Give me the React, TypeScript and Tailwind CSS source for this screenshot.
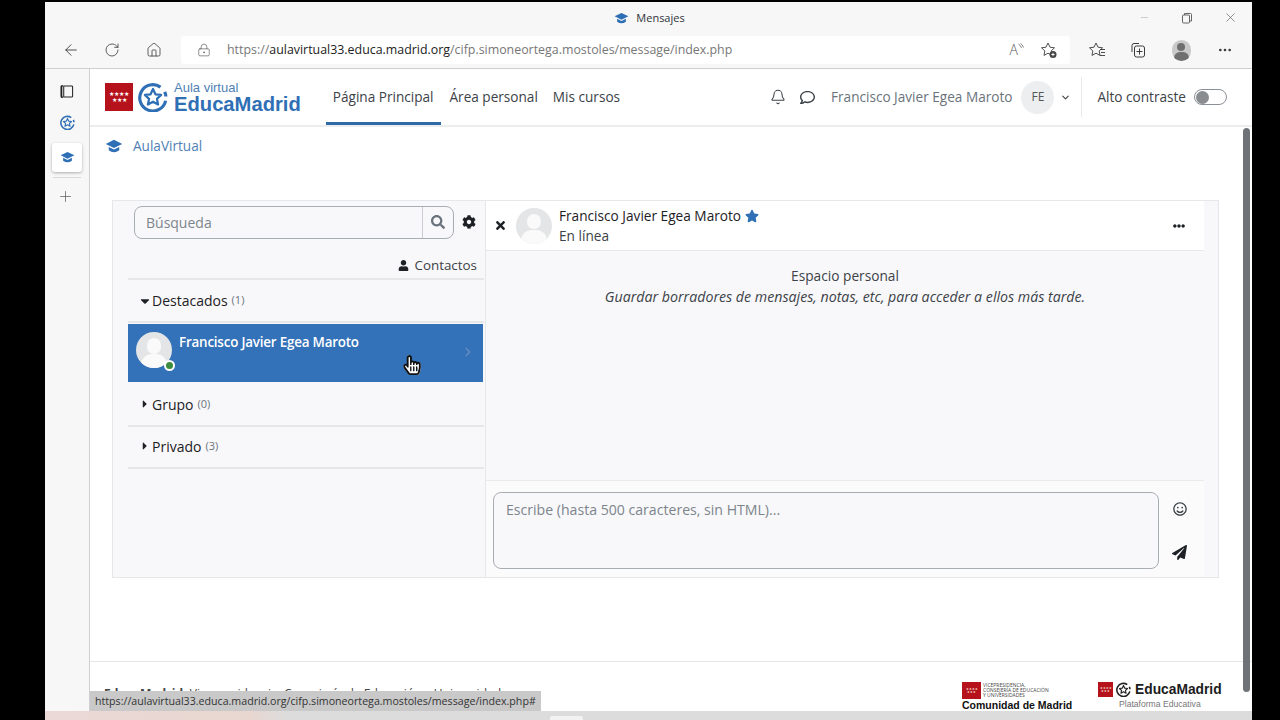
import {
  FaCaretDown,
  FaCaretRight,
  FaChevronRight,
  FaCog,
  FaEllipsisH,
  FaHandPointer,
  FaPaperPlane,
  FaRegComment,
  FaRegHandPointer,
  FaRegSmile,
  FaSearch,
  FaStar,
  FaTimes,
  FaUser,
} from "react-icons/fa";
import { ArrowLeft, Bell, ChevronDown, Ellipsis, Home, LockKeyhole, Minus, Plus, RotateCw, X } from "lucide-react";

function Cap({ className }: { className: string }) {
  return (
    <svg viewBox="0 0 24 20" className={className} fill="currentColor">
      <path d="M12 1l11 5.500L12 12 1 6.500z" />
      <path d="M5 10.500V15q7 5 14 0v-4.500L12 14z" />
    </svg>
  );
}

function RingStar({ className }: { className: string }) {
  return (
    <svg viewBox="0 0 32 32" className={className} fill="none" stroke="currentColor">
      <path d="M24 5.500A14 14 0 1 0 29.500 20" strokeWidth="3.400" />
      <path d="M28.500 10.500a14 14 0 0 1 1.200 5" strokeWidth="3.400" />
      <path
        d="M16 7.500l2.600 5.600 6.100.7-4.500 4.200 1.200 6-5.400-3-5.400 3 1.200-6-4.500-4.200 6.100-.7z"
        strokeWidth="2.400"
        strokeLinejoin="round"
      />
    </svg>
  );
}

function MadridFlag({ className, star }: { className: string; star: string }) {
  return (
    <div className={`flex items-center justify-center bg-[#b5121b] text-center text-white ${className}`}>
      <span className={star}>
        ★★★★
        <br />
        ★★★
      </span>
    </div>
  );
}

function Avatar({ className }: { className: string }) {
  return (
    <div className={`relative shrink-0 overflow-hidden rounded-full bg-[#e4e5e6] ${className}`}>
      <div className="absolute left-[30%] top-[18%] h-[42%] w-[40%] rounded-full bg-[#fafafa]" />
      <div className="absolute left-[14%] top-[62%] h-[60%] w-[72%] rounded-full bg-[#fafafa]" />
    </div>
  );
}

function ContactGroup({ label, count, open }: { label: string; count: number; open?: boolean }) {
  return (
    <div className={`flex items-center border-b-2 border-[#e6e7e8] pl-[10px] ${open ? "h-[43px]" : "h-[42px] pb-[2px]"}`}>
      <span className="flex w-[14px] justify-center text-[#1d2125]">
        {open ? <FaCaretDown className="text-[14px]" /> : <FaCaretRight className="text-[12px]" />}
      </span>
      <span className="text-[14px] text-[#1d2125]">{label}</span>
      <span className="ml-1 text-[11px] text-[#6a737b]">({count})</span>
    </div>
  );
}

export default function App() {
  return (
    <div className="relative flex h-[720px] w-[1280px] overflow-hidden bg-black pl-[45px] pr-[28px] pt-[2px] font-['Open_Sans',sans-serif]">
      <div className="flex h-[718px] w-full flex-col bg-[#f7f7f7]">
        {/* title bar */}
        <div className="relative flex h-[34px] shrink-0 items-center justify-center gap-[7px] pb-[2px] pl-[2px] text-[11px] text-[#30343a]">
          <Cap className="h-[13px] w-[15px] text-[#2f6fb5]" />
          <span>Mensajes</span>
          <div className="absolute left-[1094px] top-[8px] flex items-center text-[#555]">
            <Minus size={11} strokeWidth={1} className="text-[#999]" />
            <svg viewBox="0 0 12 12" className="ml-[31px] h-[12px] w-[12px]" fill="none" stroke="currentColor" strokeWidth="0.9">
              <rect x="1.500" y="3" width="7" height="8" rx="1" />
              <path d="M3.500 3V1.500h6a1 1 0 0 1 1 1V9H8.500" />
            </svg>
            <X size={15} strokeWidth={1} className="ml-[30px]" />
          </div>
        </div>

        {/* toolbar */}
        <div className="flex h-[32px] shrink-0 items-center pb-[4px] pl-[17px] pr-[18px] text-[#3a3a3a]">
          <ArrowLeft size={18} strokeWidth={1.2} />
          <RotateCw size={16} strokeWidth={1.2} className="ml-[24px]" />
          <Home size={16} strokeWidth={1.2} className="ml-[26px]" />
          <div className="ml-[19px] flex h-[28px] w-[889px] items-center rounded-[3px] bg-white pl-[16px] pr-[12px]">
            <LockKeyhole size={14} strokeWidth={1.1} className="text-[#555]" />
            <span className="ml-[16px] text-[12.4px] text-[#777]">
              https://<span className="text-[#222]">aulavirtual33.educa.madrid.org</span>/cifp.simoneortega.mostoles/message/index.php
            </span>
            <span className="ml-auto flex items-start text-[#555]">
              <span className="text-[14px] font-light leading-[14px]">A</span>
              <svg viewBox="0 0 6 8" className="h-[8px] w-[6px]" fill="none" stroke="currentColor" strokeWidth="0.7">
                <path d="M0.500 1q2 1 3 4M2.500 0.500q2 1 3 4" />
              </svg>
            </span>
            <svg viewBox="0 0 18 18" className="ml-[16px] h-[18px] w-[18px]" fill="none" stroke="currentColor" strokeWidth="0.9">
              <path d="M8 2l2 4.200 4.500.6-3.300 3.100.8 4.500L8 12.200l-4 2.200.8-4.500L1.500 6.800 6 6.200z" />
              <circle cx="13" cy="13.500" r="3.500" fill="#444" stroke="none" />
              <path d="M13 11.800v3.400M11.300 13.500h3.400" stroke="#fff" />
            </svg>
          </div>
          <svg viewBox="0 0 18 18" className="ml-[18px] h-[18px] w-[18px]" fill="none" stroke="currentColor" strokeWidth="0.9">
            <path d="M8 2l2 4.200 4.500.6-3.300 3.100.8 4.500L8 12.200l-4 2.200.8-4.500L1.500 6.800 6 6.200z" />
            <path d="M12 8.500h5M13 11.500h4M12 14.500h5" fill="none" />
          </svg>
          <svg viewBox="0 0 18 18" className="ml-[23px] h-[18px] w-[18px]" fill="none" stroke="currentColor" strokeWidth="1">
            <path d="M3 11V4.500a2 2 0 0 1 2-2h5" />
            <rect x="5.500" y="5" width="10" height="11" rx="2" />
            <path d="M10.500 7.500v6M7.500 10.500h6" />
          </svg>
          <div className="relative ml-[25px] h-[21px] w-[19px] overflow-hidden rounded-full bg-[#c9c9c9]">
            <div className="absolute left-[5px] top-[3px] h-[8px] w-[8px] rounded-full bg-[#6f6f6f]" />
            <div className="absolute left-[2px] top-[12px] h-[12px] w-[15px] rounded-full bg-[#6f6f6f]" />
          </div>
          <Ellipsis size={16} className="ml-[26px]" />
        </div>

        <div className="flex min-h-0 flex-1">
          {/* browser sidebar */}
          <div className="flex w-[44px] shrink-0 flex-col items-center border-t border-[#d0d0d0] pt-[15px] text-[#333]">
            <svg viewBox="0 0 15 15" className="mr-px h-[15px] w-[14px] text-[#222]" fill="none" stroke="currentColor">
              <path d="M4 1.500h8.500a1 1 0 0 1 1 1v10a1 1 0 0 1-1 1H4z" strokeWidth="1.100" />
              <path d="M3 1.500H2.500a1 1 0 0 0-1 1v10a1 1 0 0 0 1 1H3" strokeWidth="2" />
            </svg>
            <RingStar className="mt-[16px] h-[15px] w-[15px] text-[#2f6fb5]" />
            <div className="mt-[13px] flex h-[29px] w-[30px] items-center justify-center rounded-[3px] bg-white shadow-[0_1px_3px_rgba(0,0,0,0.3)]">
              <Cap className="h-[13px] w-[15px] text-[#2f6fb5]" />
            </div>
            <div className="mt-[5px] h-px w-[28px] bg-[#d8d8d8]" />
            <Plus size={17} strokeWidth={1} className="mr-[3px] mt-[10px] text-[#555]" />
          </div>

          {/* page */}
          <div className="flex min-w-0 flex-1 flex-col border-l border-t border-[#cfcfcf] bg-white">
            <header className="flex h-[58px] shrink-0 items-stretch border-b-2 border-[#eceded] pl-[15px]">
              <div className="flex items-center">
                <MadridFlag className="h-[28px] w-[28px]" star="text-[6px] leading-[6px]" />
                <RingStar className="ml-[5px] h-[30px] w-[30px] text-[#2f6fb5]" />
                <div className="ml-[6px] flex flex-col font-['Liberation_Sans',sans-serif] leading-none">
                  <span className="text-[13px] text-[#4f7fb5]">Aula virtual</span>
                  <span className="mt-[1px] text-[20.2px] font-bold leading-[18px] text-[#2f6fb5]">EducaMadrid</span>
                </div>
              </div>
              <nav className="ml-[25px] flex items-stretch text-[13.6px] text-[#3c4247]">
                <span className="flex items-center border-b-[3px] border-[#2f6aa8] pl-[7px] pr-[8px] pt-[3px]">Página Principal</span>
                <span className="flex items-center px-[8px]">Área personal</span>
                <span className="flex items-center px-[7px]">Mis cursos</span>
              </nav>
              <div className="ml-auto flex items-center">
                <Bell size={16} strokeWidth={1.6} className="text-[#3c4247]" />
                <FaRegComment className="ml-[14px] text-[15px] text-[#3c4247]" />
                <span className="ml-[16px] text-[13.6px] text-[#6a737b]">Francisco Javier Egea Maroto</span>
                <span className="ml-[9px] flex h-[33px] w-[33px] items-center justify-center rounded-full bg-[#eceeef] text-[12px] text-[#555]">FE</span>
                <ChevronDown size={11} strokeWidth={2.5} className="ml-[6px] text-[#444]" />
                <div className="ml-[10px] flex h-[40px] items-center border-l border-[#e8e9ea] pl-[15px] pr-[25px]">
                  <span className="text-[13.6px] text-[#3c4247]">Alto contraste</span>
                  <div className="ml-[8px] flex h-[16px] w-[33px] items-center rounded-full border border-[#8a9096] pl-[1px]">
                    <div className="h-[13px] w-[13px] rounded-full bg-[#8a8d90]" />
                  </div>
                </div>
              </div>
            </header>

            <div className="flex h-[37px] shrink-0 items-center pl-[15px] pt-[1px] text-[13.6px] text-[#4f7fb5]">
              <Cap className="h-[15px] w-[18px] text-[#2f6fb5]" />
              <span className="ml-[10px]">AulaVirtual</span>
            </div>

            {/* messages */}
            <div className="ml-[22px] mt-[36px] flex h-[378px] w-[1107px] shrink-0 border border-[#e6e7e8] bg-[#f8f8fa]">
              <div className="flex w-[373px] shrink-0 flex-col border-r border-[#e6e7e8] pl-[15px] pr-px">
                <div className="flex h-[39px] items-center pl-[6px] pt-[3px]">
                  <div className="flex h-[33px] w-[320px] overflow-hidden rounded-[8px] border border-[#a8adb2] bg-[#f8f8fa]">
                    <span className="flex flex-1 items-center pl-[11px] text-[14px] text-[#7d858c]">Búsqueda</span>
                    <span className="flex w-[31px] items-center justify-center border-l border-[#c8ccd0]">
                      <FaSearch className="text-[14px] text-[#6a737b]" />
                    </span>
                  </div>
                  <FaCog className="ml-[8px] text-[14px] text-[#1d2125]" />
                </div>
                <div className="flex h-[40px] items-center justify-end gap-[5px] border-b-2 border-[#e6e7e8] pb-[1px] pr-[7px] pt-[13px] text-[13.4px] text-[#3c4247]">
                  <FaUser className="text-[11px] text-[#1d2125]" />
                  <span>Contactos</span>
                </div>
                <ContactGroup label="Destacados" count={1} open />
                <div className="relative mr-px mt-px flex h-[58px] items-start bg-[#3371b8] pl-[8px] pt-[8px] text-white">
                  <Avatar className="h-[36px] w-[36px]" />
                  <span className="absolute left-[36px] top-[36px] h-[11px] w-[11px] rounded-full border-2 border-white bg-[#3d8c3d]" />
                  <span className="ml-[7px] mt-px text-[13.4px] font-semibold leading-[18px] tracking-[-0.2px]">Francisco Javier Egea Maroto</span>
                  <FaChevronRight className="absolute right-[10px] top-[23px] text-[10px] text-[#5f8bc2]" />
                </div>
                <div className="h-[3px]" />
                <ContactGroup label="Grupo" count={0} />
                <ContactGroup label="Privado" count={3} />
              </div>

              <div className="flex min-w-0 flex-1 flex-col">
                <div className="mr-[14px] flex h-[50px] shrink-0 items-center border-b border-[#e6e7e8] bg-white pl-[8px] pr-[19px]">
                  <FaTimes className="text-[13px] text-[#1d2125]" />
                  <Avatar className="ml-[9px] h-[36px] w-[36px]" />
                  <div className="ml-[7px] flex flex-col">
                    <span className="flex items-center gap-[4px] text-[13.65px] leading-[20px] text-[#1d2125]">
                      Francisco Javier Egea Maroto
                      <FaStar className="text-[14px] text-[#2f6fb5]" />
                    </span>
                    <span className="text-[13.65px] leading-[20px] text-[#3c4247]">En línea</span>
                  </div>
                  <FaEllipsisH className="ml-auto text-[12px] text-[#1d2125]" />
                </div>
                <div className="mr-[14px] flex h-[230px] shrink-0 flex-col items-center border-b border-[#e9eaeb] pt-[14px] leading-[21px] text-[#3c4247]">
                  <span className="text-[13.7px]">Espacio personal</span>
                  <span className="text-[14.2px] italic">Guardar borradores de mensajes, notas, etc, para acceder a ellos más tarde.</span>
                </div>
                <div className="mr-[14px] flex flex-1 bg-[#fbfbfc] pl-[7px] pt-[11px]">
                  <div className="h-[77px] w-[666px] rounded-[8px] border border-[#a8adb2] bg-[#f8f8fa] pl-[12px] pt-[6px] text-[14.1px] text-[#7d858c]">
                    Escribe (hasta 500 caracteres, sin HTML)...
                  </div>
                  <div className="ml-[13px] flex flex-col items-center pt-[10px]">
                    <FaRegSmile className="text-[14px] text-[#3c4247]" />
                    <FaPaperPlane className="mt-[29px] text-[15px] text-[#1d2125]" />
                  </div>
                </div>
              </div>
            </div>

            {/* footer, mostly hidden by the link preview */}
            <div className="mt-[83px] flex flex-1 items-start justify-between border-t border-[#e6e7e8] pl-[14px] pr-[30px] pt-[20px]">
              <span className="mt-[3px] text-[12.1px] text-[#444]">
                <span className="font-bold">EducaMadrid:</span> Vicepresidencia, Consejería de Educación y Universidades
              </span>
              <div className="flex gap-[25px]">
                <div className="flex w-[111px] flex-col">
                  <div className="flex items-center gap-[2px]">
                    <MadridFlag className="h-[17px] w-[19px] shrink-0" star="text-[3px] leading-[3px]" />
                    <span className="text-[5px] leading-[5px] text-[#444]">
                      VICEPRESIDENCIA,
                      <br />
                      CONSEJERÍA DE EDUCACIÓN
                      <br />Y UNIVERSIDADES
                    </span>
                  </div>
                  <span className="font-['Liberation_Sans',sans-serif] text-[10.5px] font-bold leading-[13px] text-[#111]">Comunidad de Madrid</span>
                </div>
                <div className="flex w-[124px] flex-col">
                  <div className="flex items-center">
                    <MadridFlag className="h-[15px] w-[15px] shrink-0" star="text-[3px] leading-[3px]" />
                    <RingStar className="ml-[3px] h-[15px] w-[15px] text-[#222]" />
                    <span className="ml-[4px] font-['Liberation_Sans',sans-serif] text-[13.8px] font-bold leading-[15px] text-[#1c1c1c]">EducaMadrid</span>
                  </div>
                  <span className="mt-px pl-[21px] font-['Liberation_Sans',sans-serif] text-[8.6px] leading-[12px] text-[#777]">Plataforma Educativa</span>
                </div>
              </div>
            </div>
          </div>
        </div>
      </div>

      {/* overlays */}
      <div className="absolute left-[1243px] top-[128px] h-[564px] w-[7px] rounded-full bg-[#6f7378]" />
      <div className="absolute left-[90px] top-[691px] flex h-[20px] w-[451px] items-center bg-[#c9c9c9] pl-[5px] pt-[2px] text-[10.65px] text-[#333]">
        https://aulavirtual33.educa.madrid.org/cifp.simoneortega.mostoles/message/index.php#
      </div>
      <div className="absolute left-[45px] top-[711px] h-[9px] w-[1207px] bg-[linear-gradient(90deg,#ead9d6,#e8d6d0_17%,#dcdcdc_20%)]" />
      <div className="absolute left-[550px] top-[716px] h-[4px] w-[33px] rounded-t-[2px] bg-[#f2f2f2]" />
      <div className="absolute left-[402px] top-[355px] h-[22px] w-[14px] text-[20px]">
        <FaHandPointer className="absolute left-0 top-0 text-white" />
        <FaRegHandPointer className="absolute left-0 top-0 text-[#111]" />
      </div>
    </div>
  );
}
